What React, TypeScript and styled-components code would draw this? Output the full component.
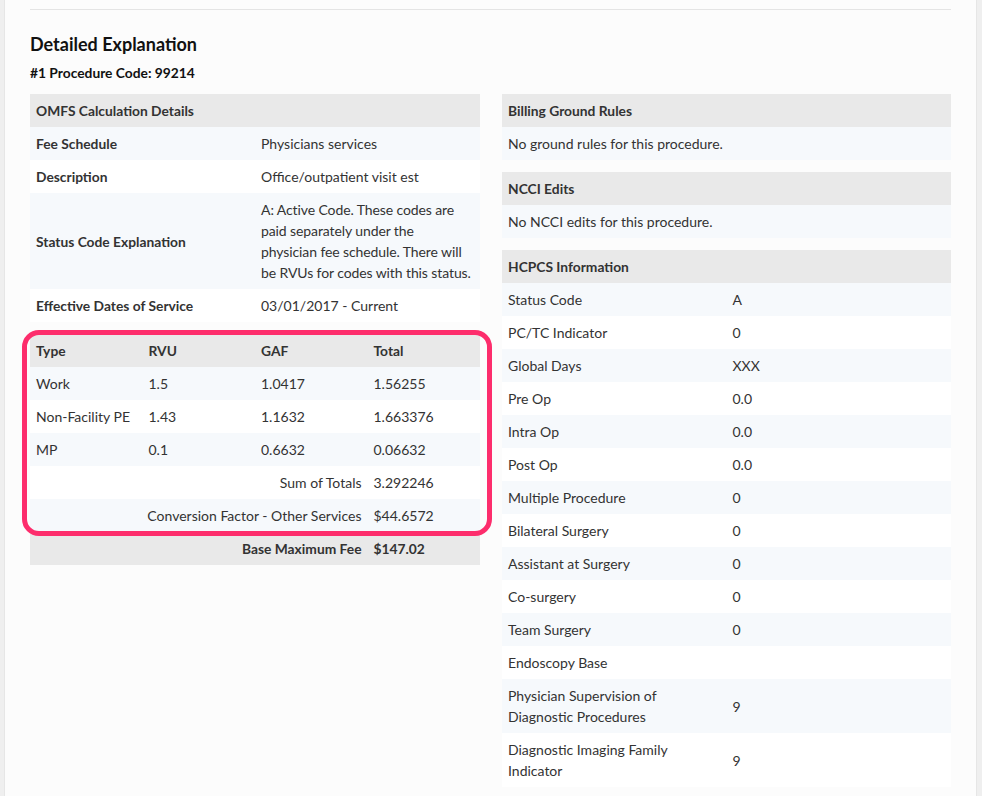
import React from "react";
import styled, { createGlobalStyle } from "styled-components";

const Global = createGlobalStyle`
  html, body { margin: 0; padding: 0; background: #efefef; }
  body { font-family: Lato, "Open Sans", Arial, sans-serif; color: #333; -webkit-font-smoothing: antialiased; }
`;

const Page = styled.div`
  margin: 0 5px 0 4px;
  min-height: 796px;
  background: #fcfcfc;
  border-left: 1px solid #e6e6e6;
  border-right: 1px solid #e6e6e6;
  padding: 9px 25px 0 25px;
  box-sizing: border-box;
`;

const Rule = styled.hr`
  border: 0;
  border-top: 1px solid #e4e4e4;
  margin: 0;
`;

const Title = styled.h2`
  font-size: 18px;
  font-weight: 700;
  color: #111;
  margin: 24px 0 0 0;
  line-height: 21px;
`;

const SubTitle = styled.h3`
  font-size: 13.8px;
  font-weight: 700;
  color: #111;
  margin: 10px 0 0 0;
  line-height: 16px;
`;

const Columns = styled.div`
  display: grid;
  grid-template-columns: 450px 449px;
  column-gap: 22px;
  margin-top: 13px;
  align-items: start;
`;

const Stack = styled.div`
  display: flex;
  flex-direction: column;
  gap: 12px;
`;

const Table = styled.table`
  width: 100%;
  border-collapse: collapse;
  table-layout: fixed;
  font-size: 14px;
  line-height: 21px;
`;

const Row = styled.tr<{ $tone: "head" | "stripe" | "plain" }>`
  background: ${(p) =>
    p.$tone === "head" ? "#e9e9e9" : p.$tone === "stripe" ? "#f6f9fc" : "#ffffff"};
`;

const Cell = styled.td<{ $bold?: boolean; $right?: boolean }>`
  padding: 6px;
  vertical-align: middle;
  text-align: ${(p) => (p.$right ? "right" : "left")};
  font-weight: ${(p) => (p.$bold ? 700 : 400)};
  font-size: ${(p) => (p.$bold ? "13.8px" : "14px")};
  color: #333;
`;

const Line = styled.span`
  display: block;
  white-space: nowrap;
  letter-spacing: -0.1px;
`;

const HeadCell = styled.th`
  padding: 6px 6px;
  text-align: left;
  font-weight: 700;
  font-size: 13.8px;
  color: #333;
`;

const Highlight = styled.div`
  position: relative;
`;

const Ring = styled.div`
  position: absolute;
  top: -4px;
  left: -8px;
  right: -12px;
  height: 206px;
  border: 5px solid #fd2d6c;
  border-radius: 17px;
  box-sizing: border-box;
  pointer-events: none;
`;

const tone = (i: number) => (i % 2 === 0 ? "stripe" : "plain") as "stripe" | "plain";

const explanation = [
  "A: Active Code. These codes are",
  "paid separately under the",
  "physician fee schedule. There will",
  "be RVUs for codes with this status.",
];

const omfs: [string, React.ReactNode][] = [
  ["Fee Schedule", "Physicians services"],
  ["Description", "Office/outpatient visit est"],
  [
    "Status Code Explanation",
    explanation.map((l) => <Line key={l}>{l}</Line>),
  ],
  ["Effective Dates of Service", "03/01/2017 - Current"],
];

const rvus = [
  ["Work", "1.5", "1.0417", "1.56255"],
  ["Non-Facility PE", "1.43", "1.1632", "1.663376"],
  ["MP", "0.1", "0.6632", "0.06632"],
];

const hcpcs: [string, string][] = [
  ["Status Code", "A"],
  ["PC/TC Indicator", "0"],
  ["Global Days", "XXX"],
  ["Pre Op", "0.0"],
  ["Intra Op", "0.0"],
  ["Post Op", "0.0"],
  ["Multiple Procedure", "0"],
  ["Bilateral Surgery", "0"],
  ["Assistant at Surgery", "0"],
  ["Co-surgery", "0"],
  ["Team Surgery", "0"],
  ["Endoscopy Base", ""],
  ["Physician Supervision of Diagnostic Procedures", "9"],
  ["Diagnostic Imaging Family Indicator", "9"],
];

function Simple({ title, text }: { title: string; text: string }) {
  return (
    <Table>
      <thead>
        <Row $tone="head">
          <HeadCell>{title}</HeadCell>
        </Row>
      </thead>
      <tbody>
        <Row $tone="stripe">
          <Cell>{text}</Cell>
        </Row>
      </tbody>
    </Table>
  );
}

export default function App() {
  return (
    <>
      <Global />
      <Page>
        <Rule />
        <Title>Detailed Explanation</Title>
        <SubTitle>#1 Procedure Code: 99214</SubTitle>
        <Columns>
          <Stack>
            <Table>
              <thead>
                <Row $tone="head">
                  <HeadCell colSpan={2}>OMFS Calculation Details</HeadCell>
                </Row>
              </thead>
              <tbody>
                {omfs.map(([k, v], i) => (
                  <Row key={k} $tone={tone(i)}>
                    <Cell $bold>{k}</Cell>
                    <Cell>{v}</Cell>
                  </Row>
                ))}
              </tbody>
            </Table>
            <Highlight>
              <Table>
                <thead>
                  <Row $tone="head">
                    <HeadCell>Type</HeadCell>
                    <HeadCell>RVU</HeadCell>
                    <HeadCell>GAF</HeadCell>
                    <HeadCell>Total</HeadCell>
                  </Row>
                </thead>
                <tbody>
                  {rvus.map((r, i) => (
                    <Row key={r[0]} $tone={tone(i)}>
                      {r.map((c, j) => (
                        <Cell key={j}>{c}</Cell>
                      ))}
                    </Row>
                  ))}
                  <Row $tone="plain">
                    <Cell colSpan={3} $right>
                      Sum of Totals
                    </Cell>
                    <Cell>3.292246</Cell>
                  </Row>
                  <Row $tone="stripe">
                    <Cell colSpan={3} $right>
                      Conversion Factor - Other Services
                    </Cell>
                    <Cell>$44.6572</Cell>
                  </Row>
                  <Row $tone="head">
                    <Cell colSpan={3} $right $bold>
                      Base Maximum Fee
                    </Cell>
                    <Cell $bold>$147.02</Cell>
                  </Row>
                </tbody>
              </Table>
              <Ring />
            </Highlight>
          </Stack>
          <Stack>
            <Simple title="Billing Ground Rules" text="No ground rules for this procedure." />
            <Simple title="NCCI Edits" text="No NCCI edits for this procedure." />
            <Table>
              <thead>
                <Row $tone="head">
                  <HeadCell colSpan={2}>HCPCS Information</HeadCell>
                </Row>
              </thead>
              <tbody>
                {hcpcs.map(([k, v], i) => (
                  <Row key={k} $tone={tone(i)}>
                    <Cell>{k}</Cell>
                    <Cell>{v}</Cell>
                  </Row>
                ))}
              </tbody>
            </Table>
          </Stack>
        </Columns>
      </Page>
    </>
  );
}
